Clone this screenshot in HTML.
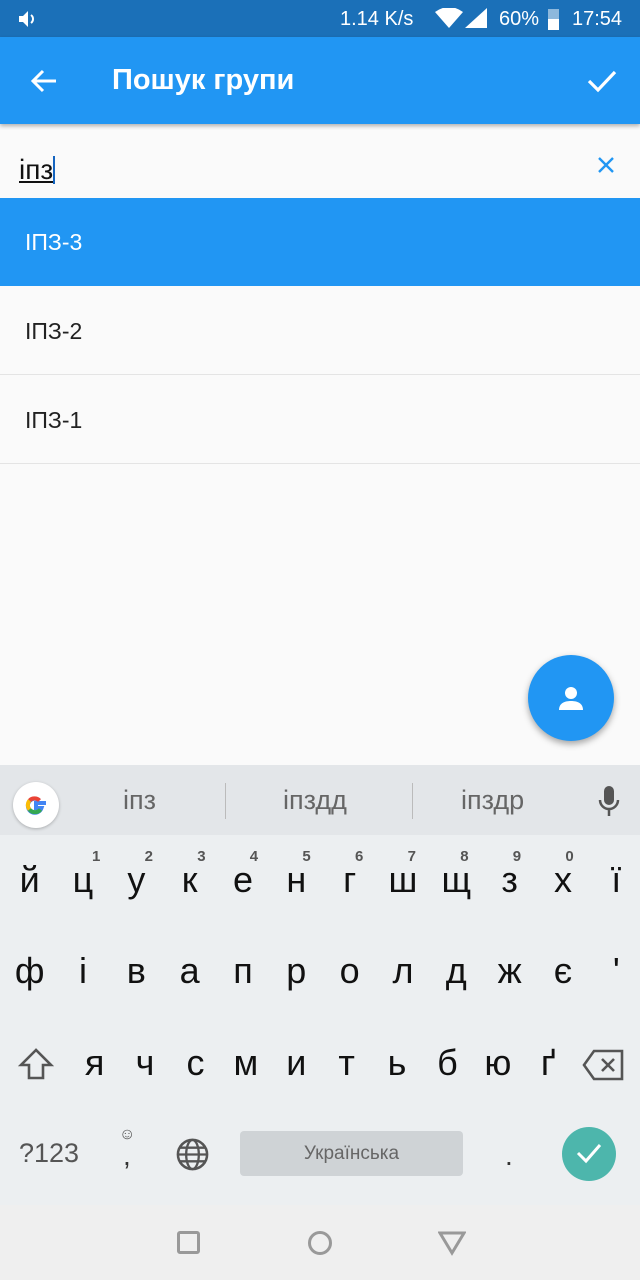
<!DOCTYPE html>
<html><head><meta charset="utf-8"><style>
*{margin:0;padding:0;box-sizing:border-box}
body{width:640px;height:1280px;overflow:hidden;background:#fafafa;font-family:"Liberation Sans","DejaVu Sans",sans-serif;position:relative}
.abs{position:absolute}
.status{top:0;left:0;width:640px;height:37px;background:#1b70b8;color:#fff;font-size:20px}
.bar{top:37px;left:0;width:640px;height:87px;background:#2196f3;box-shadow:0 2px 4px rgba(0,0,0,.3)}
.row{left:0;width:640px;height:88px;font-size:23px;color:#222;padding-left:25px;line-height:88px;border-bottom:1px solid #e4e4e4}
.kb{top:765px;left:0;width:640px;height:440px;background:#eceff1}
.key{position:absolute;width:53.33px;text-align:center;font-size:36px;color:#111;font-family:"Liberation Sans","DejaVu Sans",sans-serif}
.num{position:absolute;font-size:15px;color:#555;font-weight:bold}
</style></head><body>
<div class="abs status">
<svg class="abs" style="left:17px;top:9px" width="22" height="20" viewBox="0 0 22 20"><path d="M2 7h4l5-5v16l-5-5H2z" fill="#fff"/><path d="M14 6a5 5 0 0 1 0 8" stroke="#fff" stroke-width="2" fill="none"/></svg>
<span class="abs" style="left:340px;top:8px">1.14 K/s</span>
<svg class="abs" style="left:435px;top:8px" width="28" height="20" viewBox="0 0 28 20"><path d="M0 4Q14-6 28 4L14 20z" fill="#fff"/></svg>
<svg class="abs" style="left:465px;top:8px" width="22" height="20"><path d="M0 20L22 0V20z" fill="#fff"/></svg>
<span class="abs" style="left:499px;top:8px">60%</span>
<div class="abs" style="left:548px;top:9px;width:11px;height:21px;background:#fff;opacity:.5"></div>
<div class="abs" style="left:548px;top:19px;width:11px;height:11px;background:#fff"></div>
<span class="abs" style="left:572px;top:8px">17:54</span>
</div>
<div class="abs bar">
<svg class="abs" style="left:30px;top:31px" width="28" height="26" viewBox="0 0 28 26"><path d="M26 13H4M13 3L3 13l10 10" stroke="#fff" stroke-width="3" fill="none"/></svg>
<div class="abs" style="left:112px;top:27px;color:#fff;font-size:29px;font-weight:bold">Пошук групи</div>
<svg class="abs" style="left:587px;top:32px" width="30" height="24" viewBox="0 0 30 24"><path d="M2 12l9 9L28 3" stroke="#fff" stroke-width="3.2" fill="none"/></svg>
</div>
<div class="abs" style="left:19px;top:154px;font-size:28px;color:#111;text-decoration:underline">іпз<span style="display:inline-block;width:2px;height:28px;background:#1565c0;vertical-align:-5px"></span></div>
<svg class="abs" style="left:597px;top:156px" width="18" height="18"><path d="M2 2l14 14M16 2L2 16" stroke="#2196f3" stroke-width="2.4"/></svg>
<div class="abs row" style="top:198px;background:#2196f3;color:#fff;border:none">ІПЗ-3</div>
<div class="abs row" style="top:287px">ІПЗ-2</div>
<div class="abs row" style="top:376px">ІПЗ-1</div>
<div class="abs" style="left:528px;top:655px;width:86px;height:86px;border-radius:50%;background:#2196f3;box-shadow:0 3px 7px rgba(0,0,0,.35)"></div>
<svg class="abs" style="left:558px;top:685px" width="26" height="26" viewBox="0 0 26 26"><circle cx="13" cy="8" r="6" fill="#fff"/><path d="M1 25c0-7 6-9 12-9s12 2 12 9z" fill="#fff"/></svg>
<div class="abs kb">
<div class="abs" style="left:0;top:0;width:640px;height:70px;background:#e3e6e9"></div>
<div class="abs" style="left:13px;top:17px;width:46px;height:46px;border-radius:50%;background:#fff;box-shadow:0 1px 3px rgba(0,0,0,.25)"></div>
<svg class="abs" style="left:22px;top:26px" width="28" height="28" viewBox="0 0 28 28"><path d="M24 12H14v5h5.5a7 7 0 1 1-2-7.5" fill="none" stroke="#4285f4" stroke-width="4"/><path d="M17.5 9.5A7 7 0 0 0 7.5 9.5" fill="none" stroke="#ea4335" stroke-width="4"/><path d="M7.5 9.5a7 7 0 0 0 0 9" fill="none" stroke="#fbbc05" stroke-width="4"/><path d="M7.5 18.5a7 7 0 0 0 11 0" fill="none" stroke="#34a853" stroke-width="4"/></svg>
<div class="abs" style="left:123px;top:20px;font-size:27px;color:#666">іпз</div>
<div class="abs" style="left:225px;top:18px;width:1px;height:36px;background:#bbb"></div>
<div class="abs" style="left:283px;top:20px;font-size:27px;color:#666">іпздд</div>
<div class="abs" style="left:412px;top:18px;width:1px;height:36px;background:#bbb"></div>
<div class="abs" style="left:461px;top:20px;font-size:27px;color:#666">іпздр</div>
<svg class="abs" style="left:597px;top:20px" width="24" height="34" viewBox="0 0 24 34"><rect x="7" y="1" width="10" height="19" rx="5" fill="#555"/><path d="M3 15a9 9 0 0 0 18 0M12 24v7" stroke="#555" stroke-width="2.5" fill="none"/></svg>
</div>
<div id="keys"></div>
<div class="abs" style="left:0;top:1205px;width:640px;height:75px;background:#efefef"></div>
<div class="abs" style="left:177px;top:1231px;width:23px;height:23px;border:3px solid #999;border-radius:3px"></div>
<div class="abs" style="left:308px;top:1231px;width:24px;height:24px;border:3px solid #999;border-radius:50%"></div>
<svg class="abs" style="left:438px;top:1230px" width="28" height="26"><path d="M2 3h24L14 23z" fill="none" stroke="#999" stroke-width="3"/></svg>
<script>
var r1="йцукенгшщзхї",r2="фівапролджє'",r3="ячсмитьбюґ",h="";
for(var i=0;i<12;i++){h+='<div class="key" style="left:'+(i*53.33+3)+'px;top:859px">'+r1[i]+'</div>';
if(i<10)h+='<div class="num" style="left:'+(i*52.6+92)+'px;top:848px">'+((i+1)%10)+'</div>';
h+='<div class="key" style="left:'+(i*53.33+3)+'px;top:950px">'+r2[i]+'</div>';}
for(var i=0;i<10;i++)h+='<div class="key" style="left:'+(i*50.4+68)+'px;top:1042px">'+r3[i]+'</div>';
document.getElementById('keys').outerHTML=h;
</script>
<svg class="abs" style="left:18px;top:1047px" width="36" height="36" viewBox="0 0 36 36"><path d="M18 3L3 18h8v13h14V18h8z" fill="none" stroke="#555" stroke-width="2.6"/></svg>
<svg class="abs" style="left:582px;top:1049px" width="42" height="32" viewBox="0 0 42 32"><path d="M12 2h28v28H12L2 16z" fill="none" stroke="#555" stroke-width="2.6"/><path d="M20 10l12 12M32 10L20 22" stroke="#555" stroke-width="2.6"/></svg>
<div class="abs" style="left:19px;top:1138px;font-size:27px;color:#555">?123</div>
<div class="abs" style="left:119px;top:1126px;font-size:16px;color:#555">☺</div>
<div class="abs" style="left:123px;top:1140px;font-size:28px;color:#333">,</div>
<svg class="abs" style="left:175px;top:1137px" width="35" height="35" viewBox="0 0 36 36"><circle cx="18" cy="18" r="15" fill="none" stroke="#555" stroke-width="2.6"/><ellipse cx="18" cy="18" rx="6.5" ry="15" fill="none" stroke="#555" stroke-width="2.4"/><path d="M3 18h30M5 11h26M5 25h26" stroke="#555" stroke-width="2.4"/></svg>
<div class="abs" style="left:240px;top:1131px;width:223px;height:45px;background:#cfd3d6;border-radius:4px;text-align:center;line-height:45px;font-size:19px;color:#666">Українська</div>
<div class="abs" style="left:505px;top:1140px;font-size:28px;color:#333">.</div>
<div class="abs" style="left:562px;top:1127px;width:54px;height:54px;border-radius:50%;background:#4db6ac"></div>
<svg class="abs" style="left:576px;top:1141px" width="26" height="24" viewBox="0 0 26 24"><path d="M2 12l8 8L24 4" stroke="#fff" stroke-width="3" fill="none"/></svg>
</body></html>
